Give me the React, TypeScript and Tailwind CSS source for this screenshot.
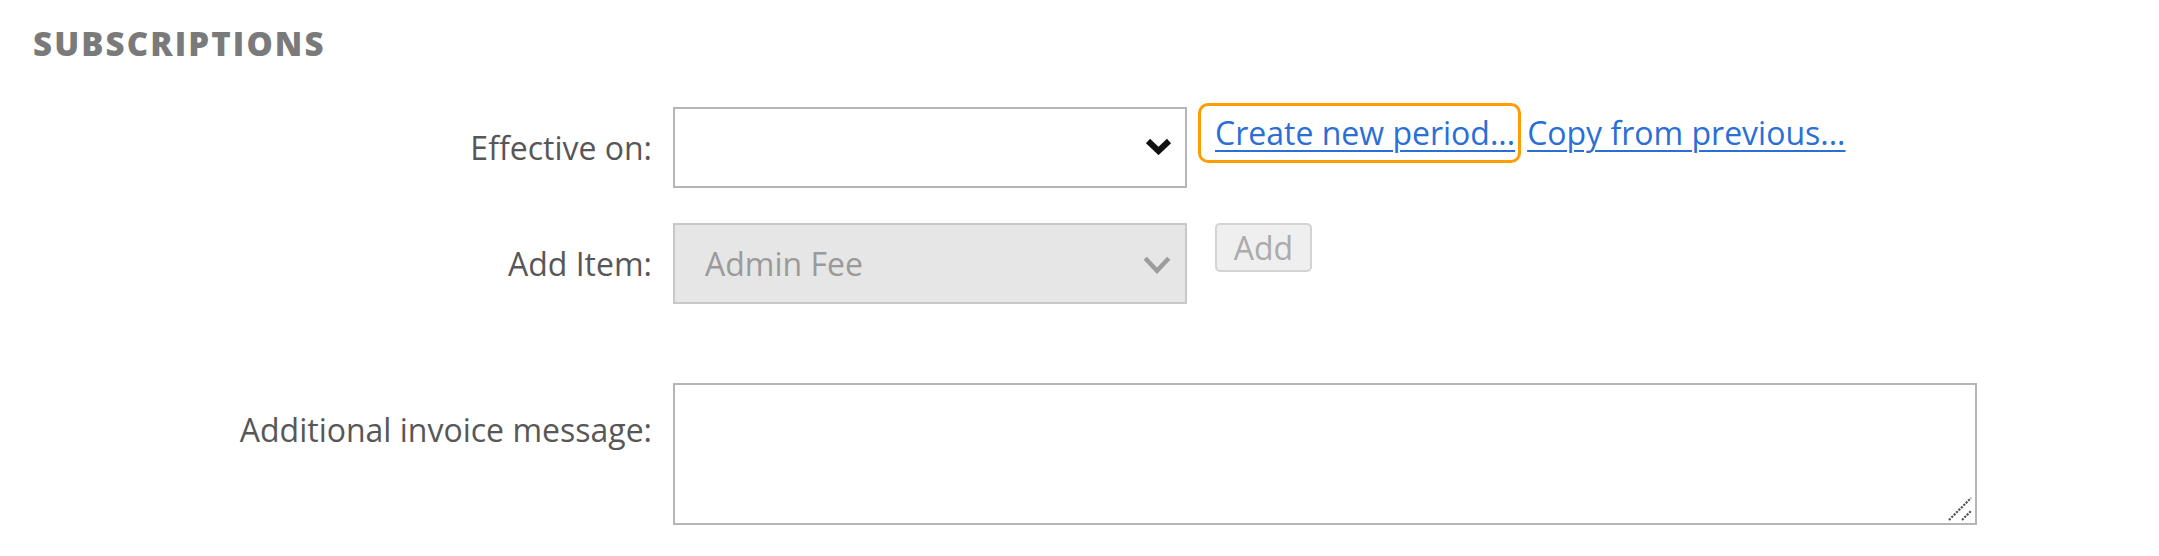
import React from "react";

function Chevron({ color, w, h, sw }: { color: string; w: number; h: number; sw: number }) {
  return (
    <svg width={w} height={h} viewBox={`0 0 ${w} ${h}`} className="block">
      <polyline
        points={`${sw / 2 + 1},${sw / 2 + 1} ${w / 2},${h - sw / 2 - 1} ${w - sw / 2 - 1},${sw / 2 + 1}`}
        fill="none"
        stroke={color}
        strokeWidth={sw}
        strokeLinejoin="miter"
      />
    </svg>
  );
}

export default function App() {
  return (
    <div
      className="w-[2159px] h-[556px] bg-white overflow-hidden"
      style={{ fontFamily: '"Open Sans", "Liberation Sans", sans-serif' }}
    >
      <div className="pt-[27px] pl-[33px] text-[33px] leading-none font-extrabold tracking-[2.1px] text-[#7a7a7a]">
        SUBSCRIPTIONS
      </div>

      {/* Row 1 */}
      <div className="mt-[47px] flex items-start">
        <div className="flex items-center">
          <div className="w-[652px] text-right text-[32px] leading-none text-[#575757]">Effective on:</div>
          <div className="ml-[21px] w-[514px] h-[81px] border-2 border-[#b5b5b5] bg-white flex items-center justify-end pr-[12px]">
            <div className="-mt-[4px]">
              <Chevron color="#111111" w={29} h={18} sw={6} />
            </div>
          </div>
        </div>
        <div className="ml-[28px] mt-[10px] flex items-start text-[32px] leading-none text-[#2a6fd6]">
          <a href="#" className="relative underline decoration-[2px] underline-offset-[5px]">
            <span className="absolute -left-[17px] -right-[6px] -top-[14px] -bottom-[14px] border-[3px] border-[#ff9c00] rounded-[10px]" />
            Create new period...
          </a>
          <a href="#" className="ml-[12px] underline decoration-[2px] underline-offset-[5px]">
            Copy from previous...
          </a>
        </div>
      </div>

      {/* Row 2 */}
      <div className="mt-[35px] flex items-start">
        <div className="flex items-center">
          <div className="w-[652px] text-right text-[32px] leading-none text-[#575757]">Add Item:</div>
          <div className="ml-[21px] w-[514px] h-[81px] border-2 border-[#c8c8c8] bg-[#e6e6e6] flex items-center justify-between pl-[30px] pr-[13px]">
            <span className="text-[32px] leading-none text-[#9a9a9a]">Admin Fee</span>
            <div className="mt-[1px]">
              <Chevron color="#9c9c9c" w={30} h={19} sw={4.5} />
            </div>
          </div>
        </div>
        <button className="ml-[28px] w-[97px] h-[49px] border-2 border-[#d3d3d3] rounded-[5px] bg-[#efefef] flex items-center justify-center text-[32px] leading-none text-[#ababab]">
          Add
        </button>
      </div>

      {/* Row 3 */}
      <div className="mt-[79px] flex items-start">
        <div className="w-[652px] pt-[31px] text-right text-[32px] leading-none text-[#575757]">
          Additional invoice message:
        </div>
        <div className="relative ml-[21px] w-[1304px] h-[142px]">
          <textarea className="block w-full h-full border-2 border-[#b5b5b5] bg-white outline-none resize-none" />
          <svg
            width="26"
            height="26"
            viewBox="0 0 26 26"
            className="absolute right-[4px] bottom-[3px] pointer-events-none"
          >
            <line x1="2" y1="24" x2="24" y2="2" stroke="#555" strokeWidth="2.2" strokeDasharray="2.2 1.2" />
            <line x1="15" y1="24" x2="24" y2="15" stroke="#555" strokeWidth="2.2" strokeDasharray="2.2 1.2" />
          </svg>
        </div>
      </div>
    </div>
  );
}
